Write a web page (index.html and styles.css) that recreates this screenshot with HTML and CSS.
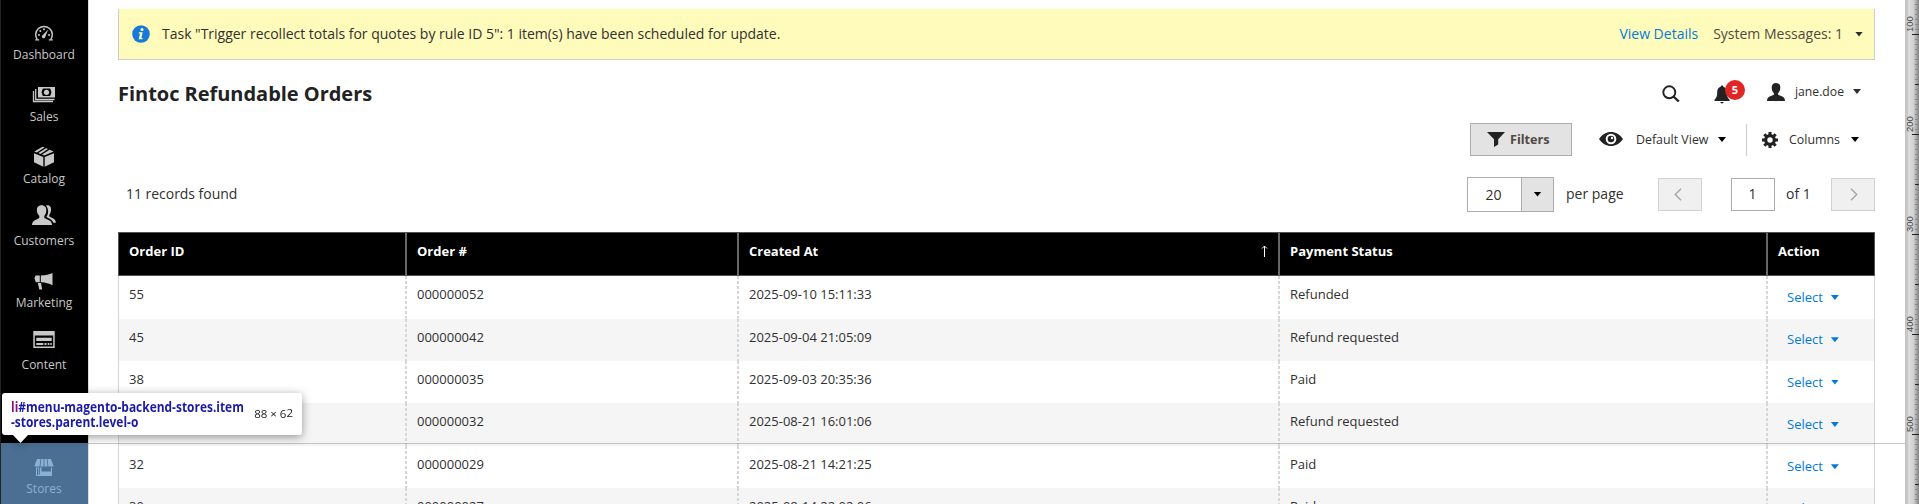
FILE: index.html
```
<!DOCTYPE html>
<html lang="en">
<head>
<meta charset="utf-8">
<title>Fintoc Refundable Orders</title>
<link rel="stylesheet" href="styles.css">
</head>
<body>
<div class="app">
  <nav class="menu">
    <a class="item"><svg class="ico" viewBox="0 0 24 24"><path d="M5.3 18.6A8.3 8.3 0 1 1 18.7 18.6" fill="none" stroke="currentColor" stroke-width="1.5"/><path d="M3.2 18.9h4M16.8 18.9h4" stroke="currentColor" stroke-width="1.3"/><path d="M16.2 8.6l-3 7.4a1.7 1.7 0 1 1-2.6-1.8z"/><circle cx="7" cy="14" r="1"/><circle cx="8.3" cy="10" r="1"/><circle cx="12" cy="8.2" r="1"/><circle cx="17" cy="14" r="1"/></svg><span>Dashboard</span></a>
    <a class="item"><svg class="ico" viewBox="0 0 24 24"><path fill-rule="evenodd" d="M6 4h17v10.500H6zM8.200 5.500v7.500h12.600V5.500z"/><path d="M8 5h3l-1.500 4.300L11 13.500H8zM21 5h-3l1.500 4.300L18 13.500h3z"/><circle cx="14.500" cy="9.300" r="2.600"/><path d="M3.700 6v10.500H22.500M1.500 8v10.500H21" fill="none" stroke="currentColor" stroke-width="1.300"/></svg><span>Sales</span></a>
    <a class="item"><svg class="ico" viewBox="0 0 24 24"><path d="M2 9.500l9.300 3.700v9.800L2 18.500zM22 9.500l-9.300 3.700v9.800l9.300-4.500zM2.300 7.800L10.500 3l2 .9-7.700 4.900zM6.300 9.400L14 4.500l2 .9-7.500 4.900zM10 10.900l7.600-4.800 4 1.800-9.400 3.900z" transform="translate(0 -1.300)"/></svg><span>Catalog</span></a>
    <a class="item"><svg class="ico raised" viewBox="0 0 24 24"><path d="M9.500 1.200c3.500 0 5 2.300 4.800 5.400-.1 2.400-.9 4.200-2 5.300v2l5.200 2.500c1.600.8 2.300 2.200 2.500 4.600H0c.2-2.400.9-3.800 2.500-4.600l4.800-2.500v-2C6 10.800 5 9 4.900 6.600 4.700 3.500 6.200 1.200 9.500 1.200z"/><path d="M14 1.500c4-.9 5.400 1.600 5 5.100-.2 2-.8 3.200-1.700 4.200v1.600l4 2.200c1.600.9 2.400 2.200 2.600 4.100h-2.600c-.8-2.600-2.300-3.400-5.100-4.800l-1.600-.9v-.8C16.500 10.500 17 5 14 1.500z"/></svg><span>Customers</span></a>
    <a class="item"><svg class="ico lowered" viewBox="0 0 24 24"><path d="M3.500 5.500h4.300v6.700H4.500a1 1 0 0 1-1-1.200L3 10 2.500 8zM8.800 5.500C14 5.500 17 4.500 20.500 3v12.300C17 13.500 14 12.200 8.800 12.200zM5.800 13h3.200l1.200 6.500H7.300z"/></svg><span>Marketing</span></a>
    <a class="item"><svg class="ico raised" viewBox="0 0 24 24"><path fill-rule="evenodd" d="M1.300 3h21.400v17H1.300zM2.800 7.500v11h18.400v-11z"/><path d="M4.300 9.700h15.400v3.300H4.300zM4.300 15h7v2h-7zM12.500 15h2v2h-2zM15.700 15h1.600v2h-1.600zM18.300 15h1.400v2h-1.400z"/></svg><span>Content</span></a>
    <a class="item"></a>
    <a class="item active"><svg class="ico lowered" viewBox="0 0 24 24"><path d="M5 3h3.500L7.600 10.500H2.300zM9.300 3h2.300v7.500H8.400zM12.400 3h2.300l.9 7.500h-3.200zM15.500 3H19l2.700 7.500h-5.300z"/><path fill-rule="evenodd" d="M4 11.500h3.200v7H8v-7h1.500v4h9.500v-4h1v8.500H4zM5 12.500v6.500h1.300v-6.500z"/></svg><span>Stores</span></a>
  </nav>
  <main class="main">
    <div class="notice">
      <svg class="info" viewBox="0 0 18 18"><circle cx="9" cy="9" r="8.800" fill="#1979d8"/><circle cx="10" cy="4.500" r="1.500" fill="#fffbbb"/><path d="M7 7.300h3.700L9.400 13h1.300l-.3 1.200H6.700L8 8.600H6.700z" fill="#fffbbb"/></svg>
      <p class="notice-text">Task "Trigger recollect totals for quotes by rule ID 5": 1 item(s) have been scheduled for update.</p>
      <a class="link">View Details</a>
      <span class="sysmsg">System Messages: 1</span><i class="caret"></i>
    </div>
    <header class="head">
      <h1>Fintoc Refundable Orders</h1>
      <svg class="search" viewBox="0 0 18 18"><circle cx="7.300" cy="7.300" r="6" fill="none" stroke="#222" stroke-width="1.900"/><path d="M11.500 11.500l5.300 5" stroke="#222" stroke-width="2.400"/></svg>
      <div class="bell"><svg viewBox="0 0 16 19"><path d="M8 .5c.8 0 1.300.5 1.300 1.300 2.500.6 3.500 2.700 3.500 5.200 0 4 .7 6 2.700 7.700V16H.5v-1.300C2.500 13 3.200 11 3.200 7c0-2.500 1-4.600 3.500-5.200C6.700 1 7.200.5 8 .5zM5.800 17h4.400L8 18.800z"/></svg><b>5</b></div>
      <svg class="person" viewBox="0 0 18 18"><path d="M9 0c3 0 4.500 2 4.300 5-.1 2.300-1 4.200-2.200 5.200v1.600l4.200 1.700c1.700.8 2.500 2 2.700 4.500H0c.2-2.500 1-3.700 2.700-4.500l4.200-1.700v-1.600C5.700 9.200 4.800 7.300 4.700 5 4.500 2 6 0 9 0z"/></svg>
      <span class="user">jane.doe</span><i class="caret"></i>
    </header>
    <div class="tools">
      <button class="filters"><svg viewBox="0 0 18 15"><path d="M0 0h18l-6.800 7.300v5.200L7 15V7.300z"/></svg>Filters</button>
      <svg class="eye" viewBox="0 0 24 14"><path fill-rule="evenodd" d="M0 7C3 2.500 7.500 0 12 0s9 2.500 12 7c-3 4.500-7.500 7-12 7S3 11.500 0 7zM12 1.700a5.300 5.300 0 1 0 0 10.600 5.300 5.300 0 0 0 0-10.600z"/><circle cx="12" cy="7" r="3.300"/><circle cx="13" cy="6" r="1.200" fill="#fff"/></svg>
      <span class="view">Default View</span><i class="caret dark"></i>
      <div class="cols"><svg class="gear" viewBox="0 0 16 16"><circle cx="8" cy="8" r="4.300" fill="none" stroke="#222" stroke-width="3.200"/><path d="M8 0v3M8 13v3M0 8h3M13 8h3M2.300 2.300l2.200 2.200M11.500 11.500l2.200 2.200M13.700 2.300l-2.200 2.200M4.500 11.500l-2.200 2.200" stroke="#222" stroke-width="3"/></svg><span>Columns</span><i class="caret dark"></i></div>
    </div>
    <div class="pager">
      <span class="found">11 records found</span>
      <div class="size"><span>20</span><em><i class="caret dark"></i></em></div>
      <span class="per">per page</span>
      <div class="nav"><svg viewBox="0 0 8 13"><path d="M7 .7L1.300 6.500 7 12.300"/></svg></div>
      <div class="cur">1</div>
      <span class="of">of 1</span>
      <div class="nav"><svg viewBox="0 0 8 13"><path d="M1 .7l5.700 5.800L1 12.300"/></svg></div>
    </div>
    <section class="grid">
      <div class="row th"><div>Order ID</div><div>Order #</div><div class="sorted">Created At<svg viewBox="0 0 7 12"><path d="M3.500 12V1M1 3.500L3.500 1 6 3.500" fill="none" stroke="#fff" stroke-width="1"/></svg></div><div>Payment Status</div><div>Action</div></div>
      <div class="row"><div>55</div><div>000000052</div><div>2025-09-10 15:11:33</div><div>Refunded</div><div class="act">Select<i class="caret"></i></div></div>
      <div class="row alt"><div>45</div><div>000000042</div><div>2025-09-04 21:05:09</div><div>Refund requested</div><div class="act">Select<i class="caret"></i></div></div>
      <div class="row"><div>38</div><div>000000035</div><div>2025-09-03 20:35:36</div><div>Paid</div><div class="act">Select<i class="caret"></i></div></div>
      <div class="row alt"><div></div><div>000000032</div><div>2025-08-21 16:01:06</div><div>Refund requested</div><div class="act">Select<i class="caret"></i></div></div>
      <div class="row"><div>32</div><div>000000029</div><div>2025-08-21 14:21:25</div><div>Paid</div><div class="act">Select<i class="caret"></i></div></div>
      <div class="row alt"><div>30</div><div>000000027</div><div>2025-08-14 22:02:06</div><div>Paid</div><div class="act">Select<i class="caret"></i></div></div>
    </section>
  </main>
</div>
<div class="guide"></div>
<svg class="ruler" width="14" height="504">
  <defs>
    <linearGradient id="shade"><stop offset="0" stop-color="#c4c4c4"/><stop offset=".2" stop-color="#c8c8c8"/><stop offset=".22" stop-color="#dedede"/><stop offset=".6" stop-color="#d2d2d2"/><stop offset="1" stop-color="#858585"/></linearGradient>
    <pattern id="minor" width="14" height="5" y="4" patternUnits="userSpaceOnUse"><path d="M10 0h4v1h-4z" fill="#888"/></pattern>
    <pattern id="mid" width="14" height="50" y="34" patternUnits="userSpaceOnUse"><path d="M10 0h4v1h-4z" fill="#222"/></pattern>
    <pattern id="major" width="14" height="100" y="34" patternUnits="userSpaceOnUse"><path d="M7 0h7v1H7z" fill="#222"/></pattern>
  </defs>
  <path d="M0 0h14v504H0z" fill="url(#shade)"/><path d="M0 0h14v504H0z" fill="url(#minor)"/><path d="M0 0h14v504H0z" fill="url(#mid)"/><path d="M0 0h14v504H0z" fill="url(#major)"/>
  <g class="marks"><text transform="translate(8 32) rotate(-90)">100</text><text transform="translate(8 132) rotate(-90)">200</text><text transform="translate(8 232) rotate(-90)">300</text><text transform="translate(8 332) rotate(-90)">400</text><text transform="translate(8 432) rotate(-90)">500</text></g>
</svg>
<div class="tip"><div class="tip-name"><span>li</span>#menu-magento-backend-stores.item<br>-stores.parent.level-o</div><div class="tip-size">88 × 6<sup>2</sup></div></div>
</body>
</html>
```
FILE: styles.css
```
* { box-sizing: border-box; }
body { margin: 0; height: 504px; overflow: hidden; background: #fff; color: #303030; font: 14px/20px "Open Sans", "Noto Sans", sans-serif; position: relative; }
h1, p { margin: 0; }
svg { flex: none; fill: #222; }
.app { display: flex; height: 504px; overflow: hidden; }
.menu { width: 88px; flex: none; height: 504px; padding-top: 9px; background: #000; border-left: 1px solid #252525; overflow: hidden; }
.item { display: flex; flex-direction: column; align-items: center; height: 62px; padding-top: 12px; margin-left: -1px; border-left: 1px solid #252525; padding-right: 1px; color: #c8c8c8; font-size: 12px; line-height: 16px; }
.item span { margin-top: 2px; }
.ico { width: 24px; height: 24px; fill: currentColor; }
.ico.raised { margin: -3px 0 3px; }
.ico.lowered { margin: 1px 0 -1px; }
.item.active { margin-left: -1px; border-left-color: #4a6f93; background: #4a6f93; color: #8bb0d5; }
.main { width: 1787px; flex: none; padding: 9px 0 0 29px; border-left: 1px solid #ddd; }
.caret { display: block; flex: none; width: 8px; height: 5px; background: #303030; clip-path: polygon(0 0, 100% 0, 50% 100%); }
.caret.dark { background: #000; }
.notice { display: flex; align-items: center; height: 51px; padding: 0 11px 0 13px; background: #fffbbb; border: 1px solid #ccc; border-top: 0; }
.info { width: 18px; height: 18px; margin-right: 12px; }
.notice-text { flex: 1; white-space: nowrap; letter-spacing: -.012px; }
.link { color: #007bdb; margin-right: 15px; }
.sysmsg { color: #514943; margin-right: 12px; }
.head { display: flex; align-items: center; height: 63px; padding-right: 14px; }
h1 { flex: 1; font-size: 20px; line-height: 28px; font-weight: 700; color: #222; padding-top: 4px; letter-spacing: -.03px; }
.search { width: 18px; height: 18px; margin: 4px 34px 0 0; }
.bell { display: flex; width: 31px; height: 23px; margin-right: 22px; }
.bell svg { width: 16px; height: 19px; margin-top: 5px; }
.bell b { width: 20px; height: 20px; margin-left: -5px; border-radius: 10px; background: #e22626; color: #fff; font-size: 11px; text-align: center; }
.person { width: 18px; height: 18px; margin-right: 10px; }
.user { width: 50px; font-size: 12.200px; margin-right: 8px; white-space: nowrap; }
.tools { display: flex; align-items: center; height: 33px; justify-content: flex-end; padding-right: 16px; }
.filters { display: flex; align-items: center; width: 102px; height: 33px; gap: 5px; padding: 0 0 0 16px; border: 1px solid #adadad; background: #e3e3e3; color: #514943; font: 700 12.600px/20px "Open Sans", sans-serif; margin-right: 27px; }
.filters svg { width: 18px; height: 15px; }
.eye { width: 24px; height: 14px; margin: -2px 13px 0 0; }
.view { width: 72px; font-size: 12.400px; margin-right: 10px; white-space: nowrap; }
.cols { display: flex; align-items: center; height: 32px; margin-left: 20px; padding-left: 15px; border-left: 1px solid #ccc; font-size: 12.400px; }
.gear { width: 16px; height: 16px; margin-right: 11px; }
.cols span { width: 52px; margin-right: 10px; }
.pager { display: flex; align-items: center; height: 76px; }
.found { flex: 1; padding-left: 8px; letter-spacing: -.03px; }
.size { display: flex; width: 87px; height: 35px; border: 1px solid #adadad; line-height: 33px; margin-right: 12px; }
.size span { flex: 1; padding-right: 2px; text-align: center; }
.size em { display: flex; align-items: center; justify-content: center; width: 32px; background: #e3e3e3; border-left: 1px solid #adadad; }
.nav, .cur { display: flex; align-items: center; justify-content: center; width: 44px; height: 33px; border: 1px solid #d2d2d2; background: #f0f0f0; }
.nav svg { width: 8px; height: 13px; margin-right: 4px; fill: none; stroke: #a5a5a5; stroke-width: 1.400; }
.nav:last-child svg { margin: 0 0 0 2px; }
.cur { border-color: #adadad; background: #fff; margin-left: 29px; padding-right: 1px; }
.per { width: 57px; margin-right: 35px; white-space: nowrap; }
.of { width: 24px; margin: 0 21px 0 11px; white-space: nowrap; }
.grid { margin: 0; }
.row { display: grid; grid-template-columns: 288px 332px 541px 488px 1fr; height: 42.300px; font-size: 13px; line-height: 18px; border: solid #d6d6d6; border-width: 0 1px; }
.row > div { padding: 9px 0 0 10px; background: repeating-linear-gradient(#d6d6d6 0 3px, transparent 3px 5px) right / 2px 100% no-repeat; white-space: nowrap; }
.row > div:last-child { background: none; }
.row.alt { background: #f5f5f5; }
.row.th { height: 44.400px; background: #000; color: #fff; font-weight: 700; border: 1px solid #555; }
.row.th > div { background: linear-gradient(#666, #666) right / 2px 100% no-repeat; }
.row.th > div:last-child { background: none; }
.sorted { display: flex; justify-content: space-between; }
.sorted svg { width: 7px; height: 12px; margin: 3px 12px 0 0; }
.row > .act { display: flex; color: #007bdb; padding: 11.600px 0 0 19px; gap: 8px; }
.act .caret { background: #007bdb; margin-top: 7px; }
.guide { position: absolute; left: 88px; right: 0; top: 443px; height: 1px; background: rgba(120, 120, 120, .4); }
.ruler { position: absolute; left: 1905px; top: 0; }
.marks { font: 9.500px "Liberation Sans", sans-serif; fill: #444; }
.tip { position: absolute; left: 2px; top: 393px; width: 300px; height: 42px; display: flex; justify-content: space-between; align-items: center; padding: 0 9px; border-radius: 3px; background: #fff; filter: drop-shadow(0 2px 5px rgba(0, 0, 0, .4)); }
.tip::after { content: ""; position: absolute; left: 11px; top: 42px; width: 15px; height: 8px; background: #fff; clip-path: polygon(0 0, 100% 0, 50% 100%); }
.tip-name { width: 232px; white-space: nowrap; color: #1a1aa6; font: 700 14px/15px "Open Sans", sans-serif; transform: scaleX(.853); transform-origin: left; }
.tip-name span { color: #881280; }
.tip-size { font-size: 11.500px; color: #222; white-space: nowrap; }
.tip-size sup { font-size: 11.500px; line-height: 0; vertical-align: 1px; }
```
